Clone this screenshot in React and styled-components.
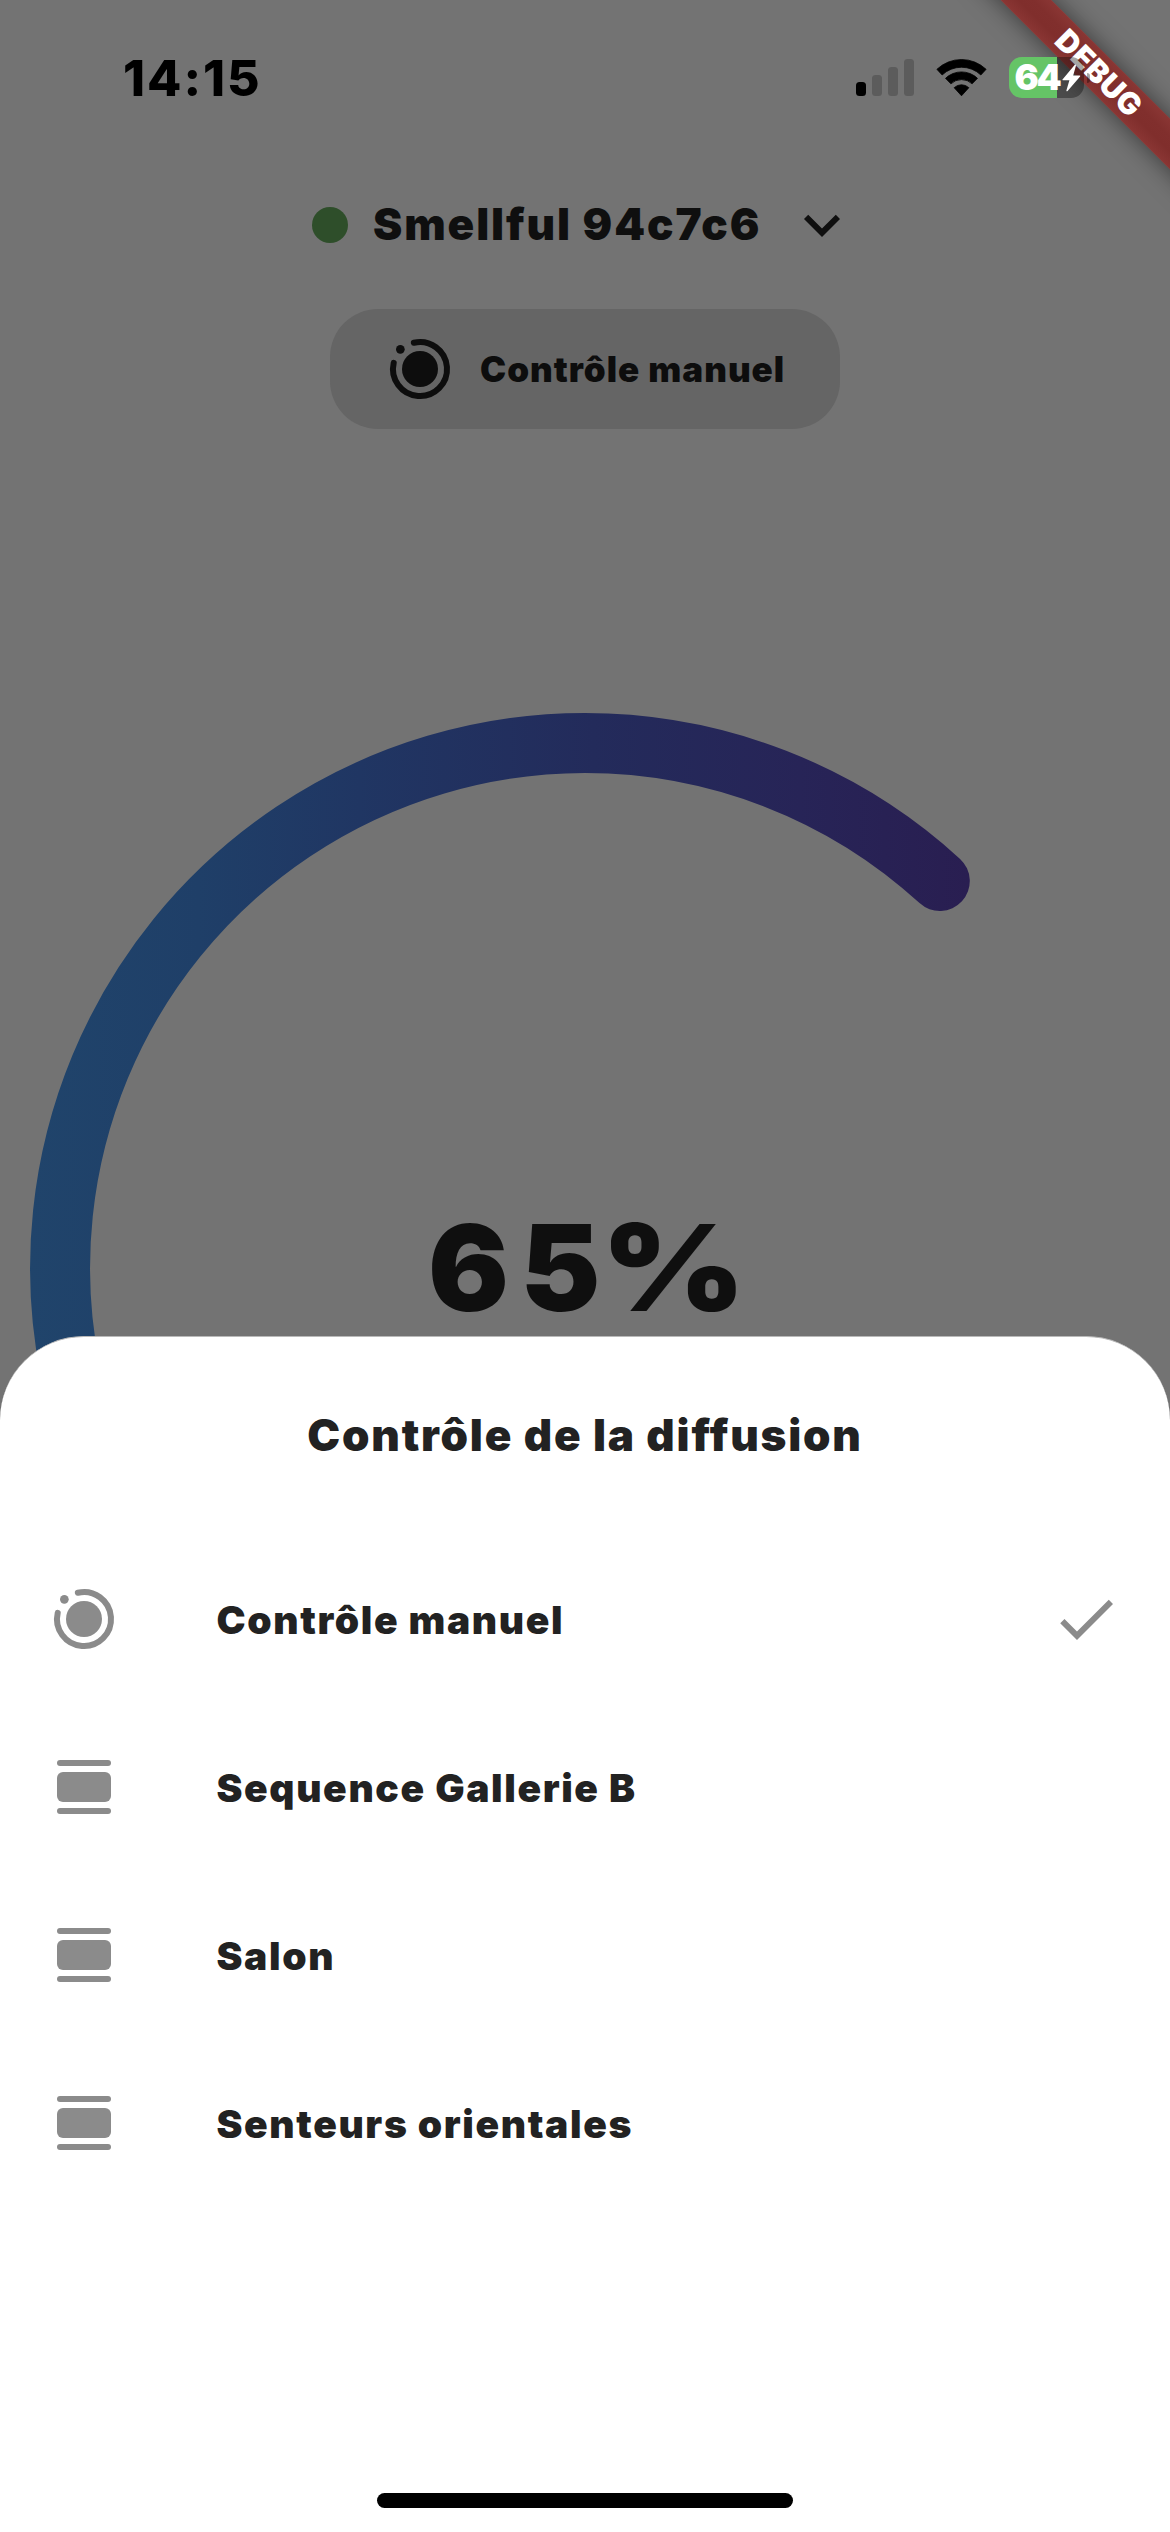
import React from 'react';
import styled, { createGlobalStyle } from 'styled-components';

const GlobalStyle = createGlobalStyle`
  * { box-sizing: border-box; }
  html, body { margin: 0; padding: 0; background: #737373; }
  body { font-family: Inter, "Liberation Sans", sans-serif; overflow: hidden; }
`;

const Screen = styled.main`
  position: relative;
  display: flex;
  flex-direction: column;
  width: 1170px;
  height: 2532px;
  overflow: hidden;
  background: #737373;
  color: #0f0f0f;
`;

const StatusBar = styled.header`
  position: relative;
  z-index: 2;
  display: flex;
  flex: none;
  align-items: center;
  justify-content: space-between;
  height: 155px;
  padding: 0 80px 0 123px;
`;

const Clock = styled.time`
  color: #000;
  font-size: 50px;
  font-weight: 800;
  line-height: 60px;
  letter-spacing: 1.95px;
`;

const StatusIcons = styled.div`
  display: flex;
  align-items: center;
  gap: 22px;
`;

const SignalBars = styled.div`
  display: flex;
  align-items: flex-end;
  gap: 6px;
  height: 37px;
`;

const SignalBar = styled.i`
  width: 10px;
  height: ${(p) => p.$height}px;
  border-radius: 3.5px;
  background: ${(p) => (p.$active ? '#000' : '#5c5c5c')};
`;

const BatteryWrap = styled.div`
  display: flex;
  align-items: center;
  gap: 3px;
`;

const Battery = styled.div`
  display: flex;
  align-items: center;
  width: 75px;
  height: 41px;
  padding-left: 5.5px;
  border-radius: 13px;
  background: linear-gradient(90deg, #65c466 48px, rgba(0, 0, 0, 0.35) 48px);
  color: #fff;
`;

const BatteryLevel = styled.span`
  width: 47.5px;
  font-size: 36px;
  font-weight: 900;
  line-height: 41px;
  letter-spacing: -2.2px;
`;

const BatteryTip = styled.i`
  width: 3px;
  height: 10px;
  border-radius: 0 5px 5px 0;
  background: rgba(0, 0, 0, 0.35);
`;

const Ribbon = styled.div`
  position: absolute;
  z-index: 1;
  top: 54px;
  left: 888px;
  width: 420px;
  height: 36px;
  padding-left: 3px;
  transform: rotate(45deg);
  background: linear-gradient(180deg, #8a3634 0%, #812f2d 35%, #802e2c 65%, #8a3634 100%);
  box-shadow: 0 0 25px rgba(0, 0, 0, 0.5);
  color: #fff;
  font-size: 30.5px;
  font-weight: 900;
  line-height: 35px;
  letter-spacing: 0.4px;
  text-align: center;
`;

const DeviceRow = styled.button`
  display: flex;
  flex: none;
  align-items: center;
  height: 140px;
  margin: 0 0 14px;
  padding: 0 0 0 312px;
  border: 0;
  background: none;
  color: inherit;
  font: inherit;
  text-align: left;
`;

const OnlineDot = styled.span`
  width: 36px;
  height: 36px;
  margin-right: 25px;
  border-radius: 50%;
  background: #2e4e2a;
`;

const DeviceName = styled.span`
  width: 413px;
  padding-bottom: 2px;
  font-size: 44px;
  font-weight: 900;
  line-height: 52px;
  letter-spacing: 1.9px;
  white-space: nowrap;
`;

const ModeButton = styled.button`
  display: flex;
  flex: none;
  align-items: center;
  align-self: center;
  gap: 24px;
  width: 510px;
  height: 120px;
  padding: 0 0 0 54px;
  border: 0;
  border-radius: 48px;
  background: #656565;
  color: #0d0d0d;
  font: 900 35px/42px Inter, "Liberation Sans", sans-serif;
  letter-spacing: 1px;
`;

const Gauge = styled.section`
  display: grid;
  flex: none;
  place-items: center;
  height: 1678px;

  > * { grid-area: 1 / 1; }
`;

const GaugeValue = styled.strong`
  display: flex;
  align-items: baseline;
  padding-right: 16px;
  font-size: 120px;
  font-weight: 900;
  line-height: 144px;
  letter-spacing: 11.5px;
`;

const PercentSign = styled.span`
  margin-left: -11px;
  letter-spacing: 0;
  transform: scaleX(1.155);
  transform-origin: left;
`;

const Sheet = styled.section`
  position: absolute;
  z-index: 3;
  right: 0;
  bottom: 0;
  left: 0;
  display: flex;
  flex-direction: column;
  height: 1196px;
  border-top: 1px solid #b9b9b9;
  border-radius: 84px 84px 0 0;
  background: #fff;
  color: #222;
`;

const SheetTitle = styled.h2`
  margin: 71px 0 73px;
  font-size: 44px;
  font-weight: 900;
  line-height: 54px;
  letter-spacing: 1.8px;
  text-align: center;
`;

const OptionList = styled.ul`
  flex: 1;
  margin: 0;
  padding: 0;
  list-style: none;
`;

const Option = styled.li`
  display: flex;
  align-items: center;
  height: 168px;
  padding: 0 48px;
`;

const OptionLabel = styled.span`
  flex: 1;
  padding: 1px 0 0 96.5px;
  font-size: 39px;
  font-weight: 900;
  line-height: 48px;
  letter-spacing: 1.62px;
`;

const IconBox = styled.svg.attrs({ viewBox: '0 0 24 24', 'aria-hidden': true })`
  flex: none;
  width: 72px;
  height: 72px;
  fill: ${(p) => p.$color || 'currentColor'};
`;

const HomeIndicator = styled.div`
  align-self: center;
  width: 416px;
  height: 15px;
  margin-bottom: 24px;
  border-radius: 8px;
  background: #000;
`;

function ManualIcon({ color }) {
  return (
    <IconBox $color={color}>
      <circle cx="12" cy="12" r="6" />
      <circle cx="5.45" cy="5.45" r="1.45" />
      <path
        d="M9.95 3.24A9 9 0 1 1 3.24 9.95"
        fill="none"
        stroke={color || 'currentColor'}
        strokeWidth="2"
        strokeLinecap="round"
      />
    </IconBox>
  );
}

function SequenceIcon({ color }) {
  return (
    <IconBox $color={color}>
      <rect x="3" y="3" width="18" height="2" rx="1" />
      <rect x="3" y="7" width="18" height="10" rx="2" />
      <rect x="3" y="19" width="18" height="2" rx="1" />
    </IconBox>
  );
}

function CheckIcon({ color }) {
  return (
    <IconBox $color={color}>
      <path d="M9 16.17L4.83 12l-1.42 1.41L9 19 21 7l-1.41-1.41z" />
    </IconBox>
  );
}

function ChevronIcon() {
  return (
    <IconBox>
      <path d="M16.59 8.59L12 13.17 7.41 8.59 6 10l6 6 6-6z" />
    </IconBox>
  );
}

function WifiIcon() {
  return (
    <svg width="51" height="38" viewBox="-0.5 -0.3 51 38.3" aria-hidden="true">
      <g stroke="#000" strokeWidth="0.8" strokeLinejoin="round">
        <path d="M0.2 10.1A36 36 0 0 1 49.8 10.1L44.5 15.8A28.3 28.3 0 0 0 5.5 15.8Z" />
        <path d="M8.9 19.2A23.2 23.2 0 0 1 41.1 19.2L35.7 24.7A15.6 15.6 0 0 0 14.3 24.7Z" />
        <path d="M17.6 28.6A10.8 10.8 0 0 1 32.4 28.6L25 36.8Z" />
      </g>
    </svg>
  );
}

function BoltIcon() {
  return (
    <svg width="19" height="28" viewBox="0 0 19 28" fill="#fff" aria-hidden="true">
      <path d="M12.8 0.8 0.5 15.4Q0 16.2 0.9 16.2H7.4L4.4 26.4Q4.4 27.8 5.6 27.1L18.1 12.4Q18.6 11.5 17.6 11.5H11.2L14 1.6Q14 0.2 12.8 0.8Z" />
    </svg>
  );
}

function GaugeArc() {
  return (
    <svg width="1170" height="1170" viewBox="0 0 1170 1170" aria-hidden="true">
      <defs>
        <linearGradient id="arc" gradientUnits="userSpaceOnUse" x1="30" y1="0" x2="970" y2="0">
          <stop offset="0" stopColor="#20446b" />
          <stop offset="0.18" stopColor="#1f3f68" />
          <stop offset="0.35" stopColor="#203663" />
          <stop offset="0.6" stopColor="#232b5b" />
          <stop offset="0.82" stopColor="#272457" />
          <stop offset="1" stopColor="#291e51" />
        </linearGradient>
      </defs>
      <path
        d="M213.8 956.2A525 525 0 0 1 585 60A525 525 0 0 1 939.8 198"
        fill="none"
        stroke="url(#arc)"
        strokeWidth="60"
        strokeLinecap="round"
      />
    </svg>
  );
}

const ICON_GREY = '#8b8b8b';

const OPTIONS = [
  { label: 'Contrôle manuel', Icon: ManualIcon, selected: true },
  { label: 'Sequence Gallerie B', Icon: SequenceIcon },
  { label: 'Salon', Icon: SequenceIcon },
  { label: 'Senteurs orientales', Icon: SequenceIcon },
];

export default function App() {
  return (
    <>
      <GlobalStyle />
      <Screen>
        <StatusBar>
          <Clock>14:15</Clock>
          <StatusIcons>
            <SignalBars>
              <SignalBar $height={14} $active />
              <SignalBar $height={21} />
              <SignalBar $height={29} />
              <SignalBar $height={37} />
            </SignalBars>
            <WifiIcon />
            <BatteryWrap>
              <Battery>
                <BatteryLevel>64</BatteryLevel>
                <BoltIcon />
              </Battery>
              <BatteryTip />
            </BatteryWrap>
          </StatusIcons>
        </StatusBar>
        <Ribbon>DEBUG</Ribbon>
        <DeviceRow>
          <OnlineDot />
          <DeviceName>Smellful 94c7c6</DeviceName>
          <ChevronIcon />
        </DeviceRow>
        <ModeButton>
          <ManualIcon />
          Contrôle manuel
        </ModeButton>
        <Gauge>
          <GaugeArc />
          <GaugeValue>
            65<PercentSign>%</PercentSign>
          </GaugeValue>
        </Gauge>
        <Sheet>
          <SheetTitle>Contrôle de la diffusion</SheetTitle>
          <OptionList>
            {OPTIONS.map(({ label, Icon, selected }) => (
              <Option key={label}>
                <Icon color={ICON_GREY} />
                <OptionLabel>{label}</OptionLabel>
                {selected && <CheckIcon color={ICON_GREY} />}
              </Option>
            ))}
          </OptionList>
          <HomeIndicator />
        </Sheet>
      </Screen>
    </>
  );
}
